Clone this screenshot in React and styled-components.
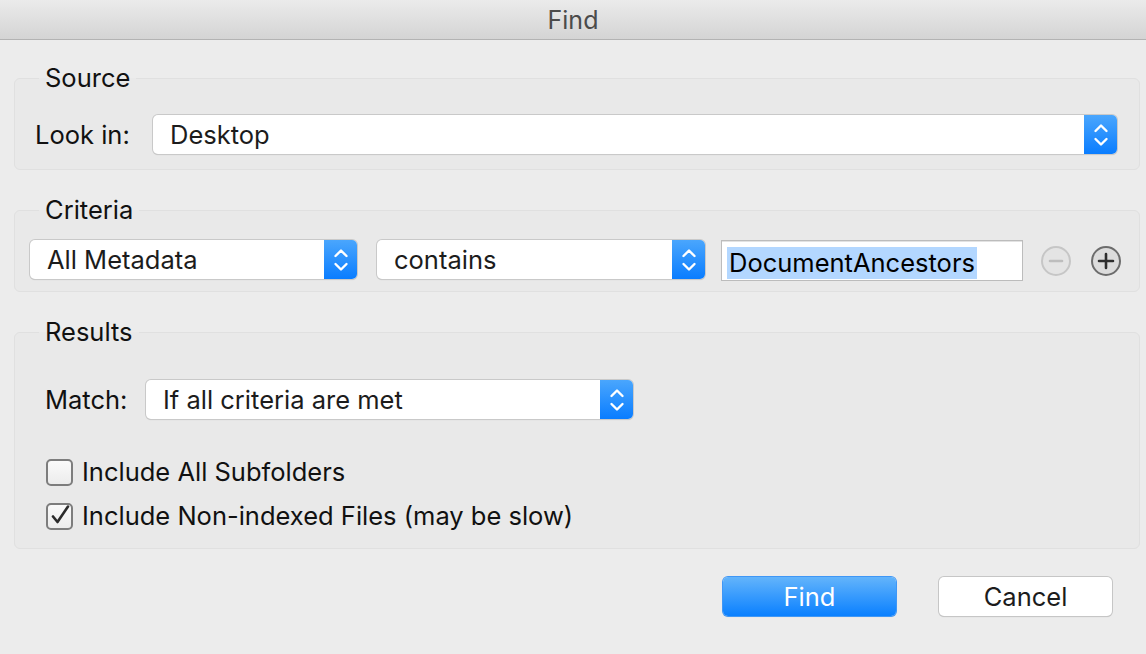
import React, { useState } from "react";
import styled, { createGlobalStyle } from "styled-components";

const GlobalStyle = createGlobalStyle`
  html, body {
    margin: 0;
    padding: 0;
    background: #ececec;
  }
  body {
    font-family: Inter, "Noto Sans", "Liberation Sans", sans-serif;
    color: #1c1c1c;
    -webkit-font-smoothing: antialiased;
  }
`;

const Window = styled.div`
  width: 1146px;
  height: 654px;
  display: flex;
  flex-direction: column;
  background: #ececec;
  overflow: hidden;
`;

const TitleBar = styled.div`
  height: 39px;
  flex-shrink: 0;
  display: flex;
  align-items: center;
  justify-content: center;
  background: linear-gradient(#ebebeb, #d4d4d4);
  border-bottom: 1px solid #b3b3b3;
  font-size: 25px;
  color: #4b4b4b;
`;

const Content = styled.div`
  padding: 0 6px 0 14px;
  display: flex;
  flex-direction: column;
`;

const Group = styled.fieldset`
  margin: ${(p) => p.$top}px 0 0 0;
  padding: ${(p) => p.$pad};
  border: 1px solid #e0e0e0;
  border-radius: 6px;
  background: #e9e9e9;
  min-width: 0;
`;

const Legend = styled.legend`
  margin-left: ${(p) => p.$offset}px;
  padding: 0 6px;
  font-size: 25.5px;
  line-height: 28px;
  color: #111;
`;

const Row = styled.div`
  display: flex;
  align-items: center;
  margin-top: ${(p) => p.$top}px;
`;

const Label = styled.span`
  font-size: 25.5px;
  color: #111;
  width: ${(p) => p.$w}px;
  flex-shrink: 0;
`;

const SelectBox = styled.div`
  width: ${(p) => p.$w}px;
  height: 39px;
  flex-shrink: 0;
  margin-left: ${(p) => p.$ml || 0}px;
  display: flex;
  align-items: stretch;
  box-sizing: border-box;
  background: #fff;
  border-radius: 5px;
  box-shadow: 0 0 0 1px #c9c9c9, 0 1px 1px rgba(0, 0, 0, 0.18);
  overflow: hidden;
  ${(p) => (p.$flex ? "flex: 1;" : "")}
`;

const SelectText = styled.span`
  flex: 1;
  display: flex;
  align-items: center;
  padding-left: 17px;
  font-size: 25.5px;
  color: #1c1c1c;
`;

const Stepper = styled.span`
  width: 33px;
  display: flex;
  align-items: center;
  justify-content: center;
  background: linear-gradient(#4aa6fd, #0a7dff);
`;

const Chevrons = () => (
  <svg width="16" height="26" viewBox="0 0 16 26">
    <path d="M2.5 9 L8 3.5 L13.5 9" fill="none" stroke="#fff" strokeWidth="2.4" strokeLinecap="round" strokeLinejoin="round" />
    <path d="M2.5 17 L8 22.5 L13.5 17" fill="none" stroke="#fff" strokeWidth="2.4" strokeLinecap="round" strokeLinejoin="round" />
  </svg>
);

function Select({ value, width, flex, ml }) {
  return (
    <SelectBox $w={width} $flex={flex} $ml={ml}>
      <SelectText>{value}</SelectText>
      <Stepper>
        <Chevrons />
      </Stepper>
    </SelectBox>
  );
}

const TextField = styled.div`
  width: 302px;
  height: 41px;
  flex-shrink: 0;
  box-sizing: border-box;
  margin: 2px 0 0 16px;
  background: #fff;
  border: 1px solid #bcbcbc;
  box-shadow: inset 0 1px 0 #e2e2e2;
  display: flex;
  align-items: flex-end;
  padding: 0 0 1px 5px;
`;

const Selected = styled.span`
  background: #b3d7ff;
  font-size: 25.5px;
  line-height: 32px;
  padding: 0 2px;
  color: #000;
`;

const RoundButton = styled.span`
  width: 30px;
  height: 30px;
  box-sizing: border-box;
  margin: 2px 0 0 ${(p) => p.$ml}px;
  border-radius: 50%;
  display: flex;
  align-items: center;
  justify-content: center;
  border: 2px solid ${(p) => (p.$disabled ? "#c6c6c6" : "#6c6c6c")};
  background: ${(p) => (p.$disabled ? "#e4e4e4" : "#dcdcdc")};
  flex-shrink: 0;
`;

const Checks = styled.div`
  display: flex;
  flex-direction: column;
  gap: 16px;
  margin-top: 39px;
  margin-left: 1px;
`;

const CheckRow = styled.label`
  display: flex;
  align-items: center;
  gap: 9px;
  height: 28px;
  font-size: 25.5px;
  line-height: 28px;
  color: #111;
  cursor: default;
`;

const Box = styled.span`
  width: 27px;
  height: 27px;
  box-sizing: border-box;
  border: 2px solid #7d7d7d;
  border-radius: 5px;
  background: linear-gradient(#fafafa, #ececec);
  display: flex;
  align-items: center;
  justify-content: center;
  flex-shrink: 0;
`;

function Checkbox({ label, checked, onToggle }) {
  return (
    <CheckRow onClick={onToggle}>
      <Box>
        {checked && (
          <svg width="22" height="22" viewBox="0 0 22 22">
            <path d="M4 11.5 L8.5 17 L19 1.5" fill="none" stroke="#2b2b2b" strokeWidth="2.6" strokeLinecap="round" strokeLinejoin="round" />
          </svg>
        )}
      </Box>
      {label}
    </CheckRow>
  );
}

const Footer = styled.div`
  display: flex;
  justify-content: flex-end;
  gap: 43px;
  padding: 28px 28px 0 0;
`;

const Button = styled.button`
  width: 173px;
  height: 39px;
  border-radius: 5px;
  font-family: inherit;
  font-size: 25.5px;
  border: none;
  padding: 0;
  color: ${(p) => (p.$primary ? "#fff" : "#1c1c1c")};
  background: ${(p) => (p.$primary ? "linear-gradient(#63b4fb, #0a80ff)" : "#fff")};
  box-shadow: ${(p) =>
    p.$primary
      ? "0 0 0 1px #3f97f6, 0 1px 1px rgba(0,0,0,0.15)"
      : "0 0 0 1px #c6c6c6, 0 1px 1px rgba(0,0,0,0.2)"};
`;

export default function App() {
  const [subfolders, setSubfolders] = useState(false);
  const [nonIndexed, setNonIndexed] = useState(true);

  return (
    <>
      <GlobalStyle />
      <Window>
        <TitleBar>Find</TitleBar>
        <Content>
          <Group $top={24} $pad="0 22px 15px 20px">
            <Legend $offset={4}>Source</Legend>
            <Row $top={23}>
              <Label $w={118}>Look in:</Label>
              <Select value="Desktop" flex />
            </Row>
          </Group>

          <Group $top={26} $pad="0 16px 10px 15px">
            <Legend $offset={9}>Criteria</Legend>
            <Row $top={14}>
              <Select value="All Metadata" width={327} />
              <Select value="contains" width={328} ml={20} />
              <TextField>
                <Selected>DocumentAncestors</Selected>
              </TextField>
              <RoundButton $disabled $ml={18}>
                <svg width="16" height="16" viewBox="0 0 16 16">
                  <path d="M2 8 H14" stroke="#bdbdbd" strokeWidth="2.6" strokeLinecap="round" />
                </svg>
              </RoundButton>
              <RoundButton $ml={20}>
                <svg width="18" height="18" viewBox="0 0 18 18">
                  <path d="M2 9 H16 M9 2 V16" stroke="#2e2e2e" strokeWidth="2.6" strokeLinecap="round" />
                </svg>
              </RoundButton>
            </Row>
          </Group>

          <Group $top={26} $pad="0 20px 18px 30px">
            <Legend $offset={-6}>Results</Legend>
            <Row $top={34}>
              <Label $w={101}>Match:</Label>
              <Select value="If all criteria are met" width={487} />
            </Row>
            <Checks>
              <Checkbox
                label="Include All Subfolders"
                checked={subfolders}
                onToggle={() => setSubfolders((v) => !v)}
              />
              <Checkbox
                label="Include Non-indexed Files (may be slow)"
                checked={nonIndexed}
                onToggle={() => setNonIndexed((v) => !v)}
              />
            </Checks>
          </Group>

          <Footer>
            <Button $primary>Find</Button>
            <Button>Cancel</Button>
          </Footer>
        </Content>
      </Window>
    </>
  );
}
